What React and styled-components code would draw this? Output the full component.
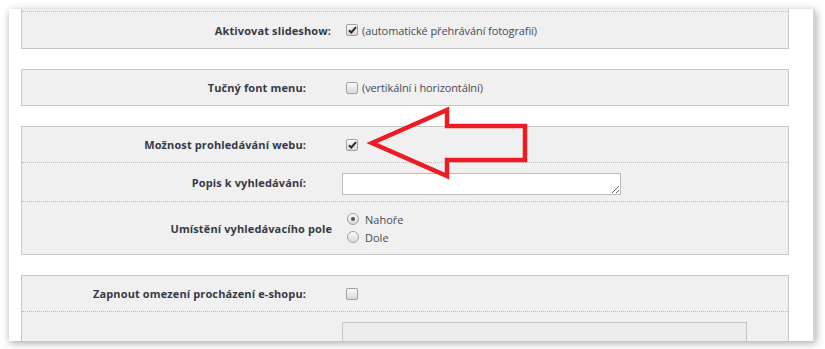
import React from "react";
import styled, { createGlobalStyle } from "styled-components";

const Global = createGlobalStyle`
  html, body { margin: 0; padding: 0; background: #fff; }
  body { font-family: "Open Sans", "Liberation Sans", sans-serif; }
  * { box-sizing: border-box; }
`;

const Stage = styled.div`
  width: 825px;
  height: 349px;
  padding: 9px 10px 8px 9px;
  background: #fff;
  overflow: hidden;
`;

const Panel = styled.div`
  position: relative;
  width: 806px;
  height: 332px;
  background: #fff;
  box-shadow: 1px 2px 8px rgba(0, 0, 0, 0.35);
  border-right: 2px solid #d6d6d6;
  overflow: hidden;
  padding-left: 12px;
`;

const Section = styled.div`
  width: 768px;
  background: #f0f0f0;
  border: 1px solid #c8c8c8;
  border-top: ${(p) => (p.$cut ? "none" : "1px solid #c8c8c8")};
  margin-bottom: 20px;
`;

const Spacer = styled.div`
  height: ${(p) => p.$h}px;
  border-bottom: 1px dotted #bdbdbd;
`;

const Row = styled.div`
  display: grid;
  grid-template-columns: 320px 1fr;
  align-items: ${(p) => p.$align || "center"};
  height: ${(p) => p.$h}px;
  border-bottom: ${(p) => (p.$last ? "none" : "1px dotted #bdbdbd")};
`;

const Label = styled.div`
  text-align: right;
  padding-right: ${(p) => p.$pr}px;
  font-size: 11px;
  font-weight: 700;
  letter-spacing: 0.12px;
  color: #363a46;
  white-space: nowrap;
`;

const Control = styled.div`
  display: flex;
  align-items: center;
  padding-top: ${(p) => p.$pt || 0}px;
`;

const Box = styled.span`
  display: inline-flex;
  align-items: center;
  justify-content: center;
  width: 12px;
  height: 12px;
  margin: 0 4px 0 4px;
  border: 1px solid #a2a2a2;
  border-radius: 2px;
  background: linear-gradient(#fbfbfb, #d8d8d8);
`;

const Hint = styled.span`
  font-size: 11px;
  letter-spacing: -0.1px;
  color: #474b56;
  white-space: nowrap;
`;

const RadioGroup = styled.div`
  display: flex;
  flex-direction: column;
  gap: 3px;
`;

const RadioItem = styled.label`
  display: flex;
  align-items: center;
  gap: 6px;
  font-size: 11px;
  color: #474b56;
`;

const RadioCircle = styled.span`
  display: inline-flex;
  align-items: center;
  justify-content: center;
  width: 12px;
  height: 12px;
  margin-left: 5px;
  border: 1px solid #a2a2a2;
  border-radius: 50%;
  background: linear-gradient(#fbfbfb, #d8d8d8);
  &::after {
    content: "";
    display: ${(p) => (p.$on ? "block" : "none")};
    width: 4px;
    height: 4px;
    border-radius: 50%;
    background: #555;
  }
`;

const TextArea = styled.textarea`
  width: 279px;
  height: 22px;
  margin: 0;
  padding: 2px;
  border: 1px solid #bcbcbc;
  background: #fff;
  font-family: inherit;
  font-size: 11px;
  resize: both;
  outline: none;
`;

const GrayBox = styled.div`
  width: 405px;
  height: 40px;
  background: #ededed;
  border: 1px solid #c4c4c4;
`;

const ArrowSvg = styled.svg`
  position: absolute;
  left: 355px;
  top: 96px;
  width: 180px;
  height: 90px;
  pointer-events: none;
`;

function Check({ on }) {
  return (
    <Box>
      {on && (
        <svg width="9" height="8" viewBox="0 0 9 8">
          <path d="M1 4.2 L3.3 6.5 L8 1.2" fill="none" stroke="#2b2b2b" strokeWidth="2" />
        </svg>
      )}
    </Box>
  );
}

export default function App() {
  return (
    <>
      <Global />
      <Stage>
        <Panel>
          <Section $cut>
            <Spacer $h={3} />
            <Row $h={36} $last>
              <Label $pr={11}>Aktivovat slideshow:</Label>
              <Control>
                <Check on />
                <Hint>(automatické přehrávání fotografií)</Hint>
              </Control>
            </Row>
          </Section>

          <Section>
            <Row $h={35} $last>
              <Label $pr={36}>Tučný font menu:</Label>
              <Control>
                <Check />
                <Hint>(vertikální i horizontální)</Hint>
              </Control>
            </Row>
          </Section>

          <Section>
            <Row $h={36}>
              <Label $pr={36}>Možnost prohledávání webu:</Label>
              <Control>
                <Check on />
              </Control>
            </Row>
            <Row $h={39}>
              <Label $pr={36}>Popis k vyhledávání:</Label>
              <Control $pt={3}>
                <TextArea />
              </Control>
            </Row>
            <Row $h={52} $last>
              <Label $pr={10}>Umístění vyhledávacího pole</Label>
              <Control>
                <RadioGroup>
                  <RadioItem>
                    <RadioCircle $on />
                    Nahoře
                  </RadioItem>
                  <RadioItem>
                    <RadioCircle />
                    Dole
                  </RadioItem>
                </RadioGroup>
              </Control>
            </Row>
          </Section>

          <Section>
            <Row $h={36}>
              <Label $pr={36}>Zapnout omezení procházení e-shopu:</Label>
              <Control>
                <Check />
              </Control>
            </Row>
            <Row $h={60} $align="start" $last>
              <Label $pr={36} />
              <Control $pt={10}>
                <GrayBox />
              </Control>
            </Row>
          </Section>

          <ArrowSvg viewBox="364 105 180 90">
            <polygon
              points="372,143 447,110 447,126 525,126 525,160 447,160 447,176"
              fill="none"
              stroke="#ed1c24"
              strokeWidth="4.5"
              strokeLinejoin="miter"
            />
          </ArrowSvg>
        </Panel>
      </Stage>
    </>
  );
}
